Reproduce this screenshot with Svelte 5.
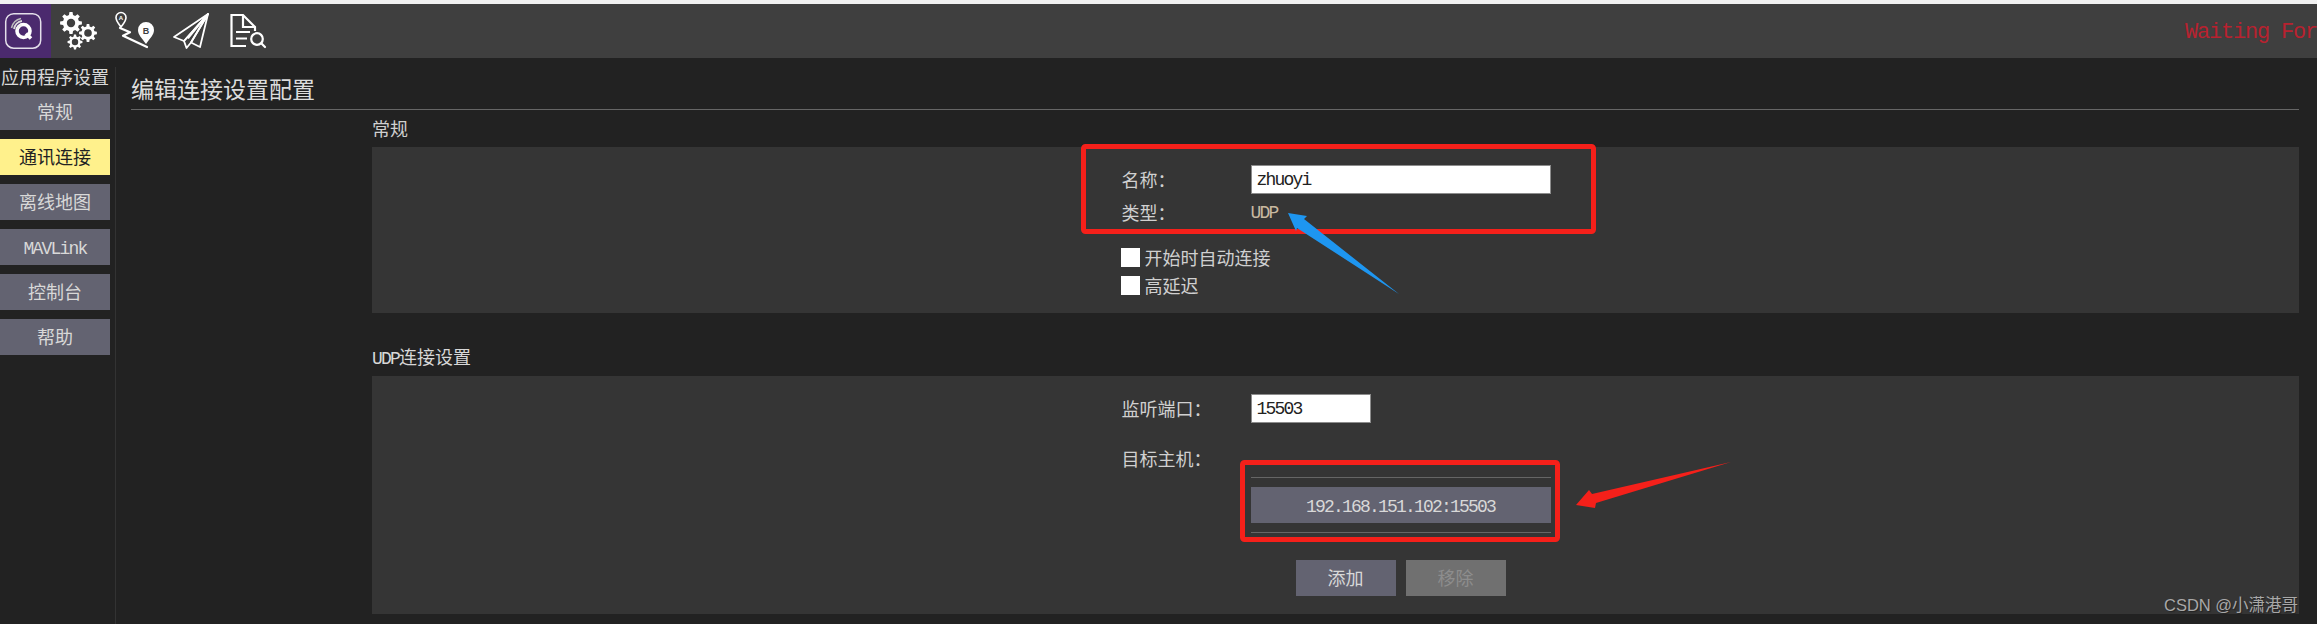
<script lang="ts">
  const navItems = [
    { label: '常规' },
    { label: '通讯连接', active: true },
    { label: '离线地图' },
    { label: 'MAVLink', latin: true },
    { label: '控制台' },
    { label: '帮助' }
  ];

  // toothed outline used for the three settings gears
  function gearPath(cx: number, cy: number, r: number, teeth: number): string {
    const inner = r * 0.74;
    const step = (Math.PI * 2) / teeth;
    const pts: string[] = [];
    for (let i = 0; i < teeth; i++) {
      const a = i * step;
      const corners: [number, number][] = [
        [inner, a - step * 0.32],
        [r, a - step * 0.18],
        [r, a + step * 0.18],
        [inner, a + step * 0.32]
      ];
      for (const [rad, ang] of corners) {
        pts.push(`${(cx + rad * Math.cos(ang)).toFixed(2)} ${(cy + rad * Math.sin(ang)).toFixed(2)}`);
      }
    }
    return `M${pts.join('L')}Z`;
  }

  const gears = [
    { cx: 71, cy: 23, r: 11, hole: 4.2, teeth: 8 },
    { cx: 88, cy: 33, r: 9, hole: 3.8, teeth: 8 },
    { cx: 75, cy: 42, r: 7.5, hole: 3.2, teeth: 8 }
  ];
</script>

<div class="page">
  <header class="toolbar">
    <div class="logo">
      <svg width="51" height="54" viewBox="0 4 51 54" fill="none">
        <rect x="5.7" y="13.7" width="35" height="34.5" rx="8" stroke="#e4dfea" stroke-width="1.5" />
        <circle cx="23.5" cy="31" r="6.5" stroke="#fff" stroke-width="3.6" />
        <path d="M26 33.5 31 38.5" stroke="#fff" stroke-width="3.6" />
        <path d="M14 29a9.5 9.5 0 0 1 8-8" stroke="#ddd" stroke-width="1.8" />
        <path d="M11.5 28a12.5 12.5 0 0 1 9.5-9.5" stroke="#bbb" stroke-width="1.6" />
        <path d="M17 29.5a6 6 0 0 1 4.5-4.5" stroke="#eee" stroke-width="1.8" />
      </svg>
    </div>
    <button class="tool" aria-label="设置">
      <svg width="56" height="54" viewBox="51 4 56 54">
        {#each gears as g}
          <path d={gearPath(g.cx, g.cy, g.r, g.teeth)} fill="#fff" />
          <circle cx={g.cx} cy={g.cy} r={g.hole} fill="#3f3f3f" />
        {/each}
      </svg>
    </button>
    <button class="tool" aria-label="规划">
      <svg width="56" height="54" viewBox="107 4 56 54" fill="none">
        <path d="M121 27c-2.8-4-5-6-5-9.5a5 5 0 0 1 10 0c0 3.5-2.2 5.5-5 9.5Z" stroke="#fff" stroke-width="1.6" />
        <text x="121" y="20" class="pin-a">A</text>
        <path d="M120 28 130 32.3 123 35.7 147 47" stroke="#fff" stroke-width="2.2" stroke-linecap="round" stroke-linejoin="round" />
        <path d="M146 44c-4-6-8-9-8-14a8 8 0 0 1 16 0c0 5-4 8-8 14Z" fill="#fff" />
        <text x="146" y="33.5" class="pin-b">B</text>
      </svg>
    </button>
    <button class="tool" aria-label="飞行">
      <svg width="56" height="54" viewBox="163 4 56 54" fill="none" stroke="#fff" stroke-width="1.8" stroke-linejoin="round">
        <path d="M208 14 174 37 184 41Z" />
        <path d="M184 41 186.5 48 191 42.5 208 14Z" />
        <path d="M191 42.5 200 47 208 14Z" />
        <path d="M188 38.5 208 14" />
      </svg>
    </button>
    <button class="tool" aria-label="分析">
      <svg width="56" height="54" viewBox="219 4 56 54" fill="none" stroke="#fff" stroke-width="2.2">
        <path d="M246 46H231.5V15H243L255 27V31" />
        <path d="M243 15V27H255" />
        <path d="M236 32H250M236 38.5H247" />
        <circle cx="257" cy="39" r="5.8" />
        <path d="M261.500 43.500 265 47" stroke-linecap="round" />
      </svg>
    </button>
    <div class="status">Waiting For</div>
  </header>

  <div class="body">
    <aside class="sidebar">
      <div class="sidebar-title">应用程序设置</div>
      <nav class="nav">
        {#each navItems as item}
          <button class="btn" class:active={item.active}>
            {#if item.latin}<span class="mono">{item.label}</span>{:else}{item.label}{/if}
          </button>
        {/each}
      </nav>
    </aside>

    <main class="content">
      <h1 class="heading">编辑连接设置配置</h1>
      <section class="group">
        <div class="group-title">常规</div>
        <div class="panel">
          <div class="form">
            <div class="row name-row">
              <span class="label">名称：</span>
              <input class="field wide" value="zhuoyi" />
            </div>
            <div class="row type-row">
              <span class="label">类型：</span>
              <span class="mono type-value">UDP</span>
            </div>
            <label class="check first-check"><span class="box"></span><span class="check-text">开始时自动连接</span></label>
            <label class="check"><span class="box"></span><span class="check-text">高延迟</span></label>
          </div>
        </div>
      </section>

      <section class="group second">
        <div class="group-title"><span class="mono">UDP</span>连接设置</div>
        <div class="panel">
          <div class="form">
            <div class="row name-row">
              <span class="label">监听端口：</span>
              <input class="field short" value="15503" />
            </div>
            <div class="row host-row">
              <span class="label">目标主机：</span>
            </div>
            <div class="hosts">
              <div class="divider"></div>
              <button class="btn host"><span class="mono">192.168.151.102:15503</span></button>
              <div class="divider"></div>
              <div class="actions">
                <button class="btn action">添加</button>
                <button class="btn action off">移除</button>
              </div>
            </div>
          </div>
        </div>
      </section>
    </main>
  </div>

  <!-- red and blue markup drawn over the screenshot -->
  <svg class="markup" width="2317" height="624" viewBox="0 0 2317 624" fill="none">
    <rect x="1083.5" y="146.5" width="510" height="85" rx="2" stroke="#f5201a" stroke-width="5" />
    <rect x="1242.5" y="462.5" width="315" height="77" rx="2" stroke="#f5201a" stroke-width="5" />
    <path d="M1288 213 1307 216 1304 219 1399 294 1297 228 1296 231Z" fill="#1e96f0" />
    <path d="M1576 505 1589 490 1592 494 1731 462 1596 503 1595 508Z" fill="#f5201a" />
  </svg>

  <div class="watermark">CSDN @小潇港哥</div>
</div>

<style>
  :global(body) {
    margin: 0;
    background: #222;
  }

  .page {
    position: relative;
    width: 2317px;
    height: 624px;
    overflow: hidden;
    background: #222;
    color: #d8d8d8;
    font-family: "Noto Sans CJK SC", "Liberation Mono", monospace;
    font-size: 18px;
  }

  .mono {
    font-family: "Liberation Mono", monospace;
    font-size: 18px;
    letter-spacing: -1.8px;
  }

  .toolbar {
    display: flex;
    height: 54px;
    border-top: 4px solid #f1f1f1;
    background: #3f3f3f;
  }

  .logo {
    width: 51px;
    height: 54px;
    background: #4b2a6e;
  }

  .logo svg,
  .tool svg {
    display: block;
  }

  .tool {
    width: 56px;
    height: 54px;
    padding: 0;
    border: 0;
    background: none;
  }

  .pin-a,
  .pin-b {
    font-family: "Liberation Sans", sans-serif;
    font-weight: 700;
    text-anchor: middle;
  }

  .pin-a {
    font-size: 6px;
    fill: #fff;
  }

  .pin-b {
    font-size: 9px;
    fill: #3f3f3f;
  }

  .status {
    margin-left: auto;
    padding-top: 17px;
    font-family: "Liberation Mono", monospace;
    font-size: 22px;
    line-height: 24px;
    letter-spacing: -1.2px;
    color: #b8222f;
    white-space: nowrap;
  }

  .body {
    display: flex;
    height: 566px;
  }

  .sidebar {
    width: 115px;
    height: 557px;
    margin-top: 9px;
    border-right: 1px solid #333;
    flex-shrink: 0;
  }

  .sidebar-title {
    height: 27px;
    line-height: 18px;
    padding-left: 1px;
    white-space: nowrap;
  }

  .nav {
    display: flex;
    flex-direction: column;
    gap: 9px;
    width: 110px;
  }

  .btn {
    height: 36px;
    padding: 0 0 2px;
    border: 0;
    background: #636371;
    color: #d8d8d8;
    font: inherit;
    line-height: 34px;
  }

  .btn.active {
    background: #fff18c;
    color: #222;
  }

  .content {
    flex: 1;
    padding-left: 15px;
    padding-right: 18px;
  }

  .heading {
    height: 50px;
    margin: 0;
    border-bottom: 1px solid #666;
    font-size: 23px;
    font-weight: 400;
    line-height: 58px;
    padding-top: 1px;
    color: #dcdcdc;
  }

  .group {
    margin-left: 241px;
  }

  .group.second {
    margin-top: 31px;
  }

  .group-title {
    height: 37px;
    box-sizing: border-box;
    padding-top: 6px;
    line-height: 24px;
    color: #d0d0d0;
  }

  .group.second .group-title {
    height: 32px;
    padding-top: 0;
    color: #d8d8d8;
  }

  .panel {
    display: flex;
    justify-content: center;
    padding: 18px 0;
    background: #353535;
  }

  .form {
    width: 430px;
  }

  .row {
    display: flex;
    align-items: center;
  }

  .name-row {
    height: 29px;
  }

  .label {
    width: 129px;
    padding-left: 1px;
    padding-bottom: 2px;
    flex-shrink: 0;
    color: #d0d0d0;
  }

  .type-row {
    height: 20px;
    margin-top: 9px;
  }

  .type-value {
    color: #c9b9a0;
  }

  .field {
    height: 29px;
    box-sizing: border-box;
    padding: 0 5px;
    border: 1px solid #8c8c8c;
    background: #fff;
    color: #222;
    font-family: "Liberation Mono", monospace;
    font-size: 18px;
    letter-spacing: -1.8px;
  }

  .field.wide {
    width: 300px;
  }

  .field.short {
    width: 120px;
  }

  .check {
    display: flex;
    align-items: center;
    gap: 5px;
    height: 19px;
    margin-top: 9px;
    color: #d0d0d0;
  }

  .first-check {
    margin-top: 25px;
  }

  .check-text {
    padding-bottom: 2px;
  }

  .box {
    width: 19px;
    height: 19px;
    background: #fff;
  }

  .host-row {
    height: 20px;
    margin-top: 26px;
  }

  .hosts {
    display: flex;
    flex-direction: column;
    margin-left: 130px;
    margin-top: 8px;
    width: 300px;
  }

  .divider {
    height: 1px;
    background: #666;
  }

  .host {
    margin: 9px 0;
  }

  .actions {
    display: flex;
    justify-content: center;
    gap: 10px;
    margin-top: 27px;
  }

  .action {
    width: 100px;
  }

  .action.off {
    background: #707070;
    color: #8d8d8d;
  }

  .markup {
    position: absolute;
    top: 0;
    left: 0;
    pointer-events: none;
  }

  .watermark {
    position: absolute;
    top: 594px;
    left: 2164px;
    font-family: "Liberation Sans", "Noto Sans CJK SC", sans-serif;
    font-size: 16.5px;
    line-height: 22px;
    color: #a8a8a8;
    text-shadow: 1px 1px 1px #222;
    white-space: nowrap;
  }
</style>
